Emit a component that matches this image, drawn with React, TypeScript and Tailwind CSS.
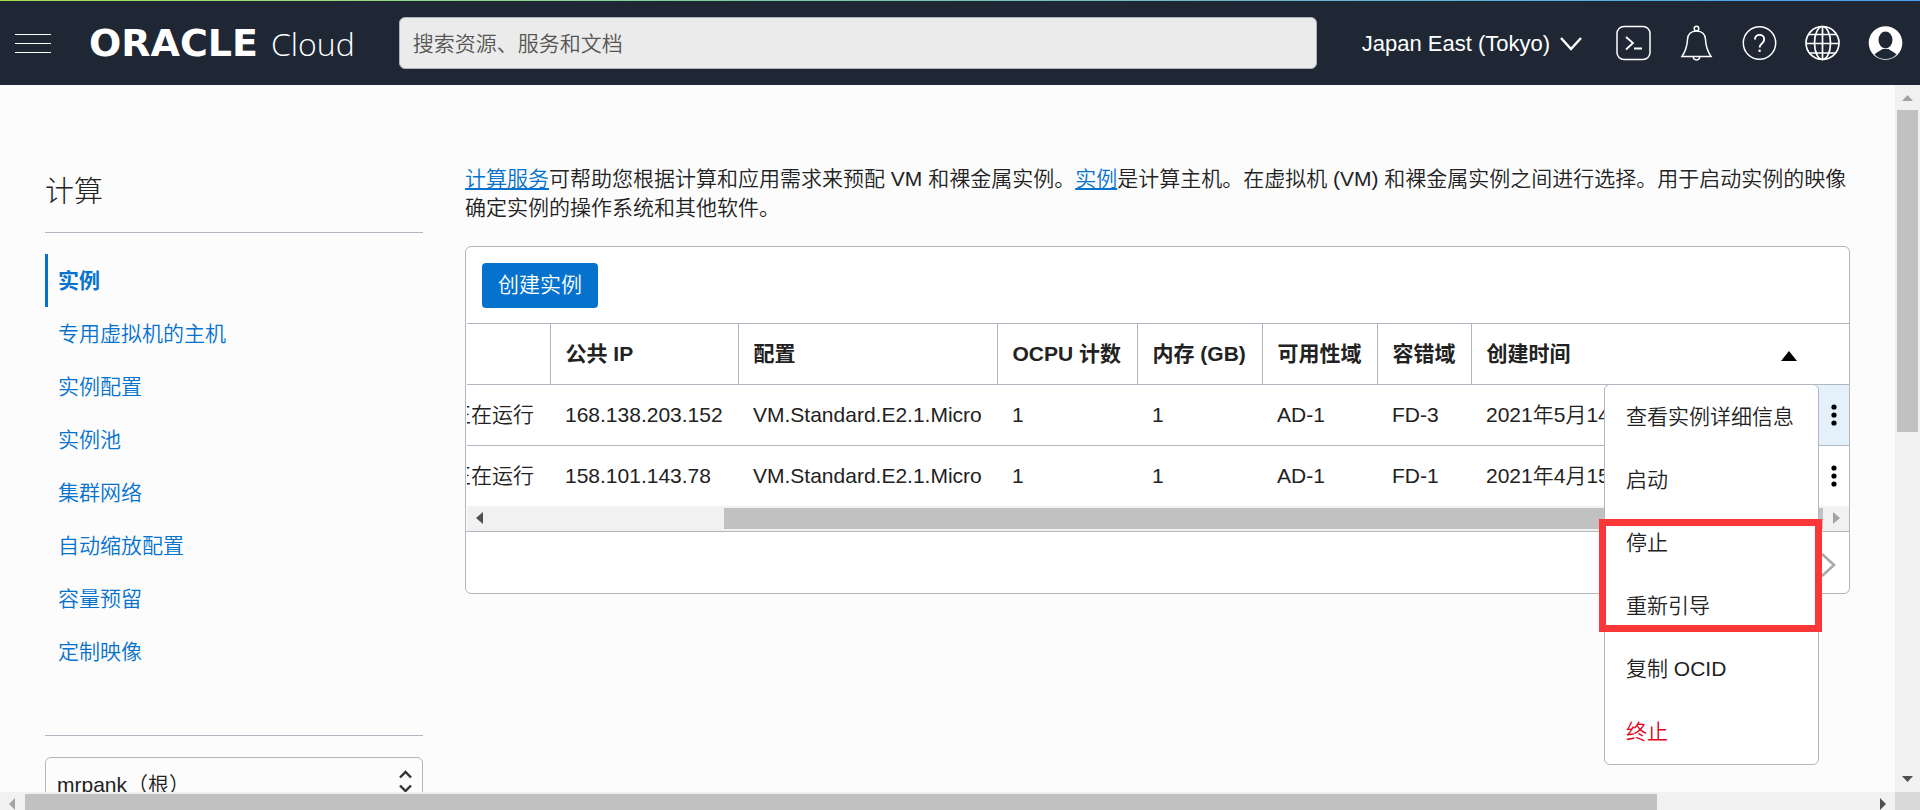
import React from "react";

const navItems = ["实例", "专用虚拟机的主机", "实例配置", "实例池", "集群网络", "自动缩放配置", "容量预留", "定制映像"];

const rows = [
  { status: "正在运行", ip: "168.138.203.152", shape: "VM.Standard.E2.1.Micro", ocpu: "1", memory: "1", ad: "AD-1", fd: "FD-3", created: "2021年5月14日", active: true },
  { status: "正在运行", ip: "158.101.143.78", shape: "VM.Standard.E2.1.Micro", ocpu: "1", memory: "1", ad: "AD-1", fd: "FD-1", created: "2021年4月15日", active: false },
];

const menuItems = ["查看实例详细信息", "启动", "停止", "重新引导", "复制 OCID", "终止"];

function Header() {
  return (
    <header className="shrink-0 bg-[#1e2733] text-white">
      <div className="h-px bg-linear-to-r from-[#a5e34d] to-[#4f9cf5]" />
      <div className="flex h-[84px] items-center pr-[17px] pl-[15px]">
        <button aria-label="导航菜单" className="flex w-9 shrink-0 flex-col gap-2">
          <span className="h-px bg-white" />
          <span className="h-px bg-white" />
          <span className="h-px bg-white" />
        </button>
        <a href="#" className="ml-[38px] flex shrink-0 items-baseline gap-2 leading-none">
          <span className="w-[174px] font-['DejaVu_Sans',sans-serif] text-[38px] font-bold">ORACLE</span>
          <span className="font-['Open_Sans',sans-serif] text-[32px] font-light">Cloud</span>
        </a>
        <input
          aria-label="搜索资源、服务和文档"
          placeholder="搜索资源、服务和文档"
          className="ml-[44px] h-[52px] min-w-0 flex-1 rounded-md border border-[#aeb4bd] bg-[#ebebeb] px-[13px] pt-[2px] text-[21px] text-[#333] placeholder:text-[#555]"
        />
        <button className="ml-[45px] flex shrink-0 items-center gap-[10px] text-[22px] whitespace-nowrap">
          Japan East (Tokyo)
          <svg width="22" height="16" viewBox="0 0 22 16" fill="none" stroke="currentColor" strokeWidth="2.4"><path d="M1 3 11 14 21 3" /></svg>
        </button>
        <nav aria-label="工具" className="ml-[34px] flex shrink-0 items-center gap-[28px]">
          <button aria-label="Cloud Shell">
            <svg width="35" height="36" viewBox="0 0 35 36" fill="none" stroke="currentColor" strokeWidth="1.5"><rect x="1" y="1.500" width="33" height="33" rx="7" /><path d="m10 12 7 6-7 6.500M18 23.500h8" strokeWidth="1.800" /></svg>
          </button>
          <button aria-label="通知">
            <svg width="35" height="36" viewBox="0 0 35 36" fill="none" stroke="currentColor" strokeWidth="1.5"><circle cx="17.500" cy="3.500" r="2.300" /><path d="M17.500 6c-5.500 0-8.800 3.500-9 8.500-.3 7-1.500 11-5.500 17h29c-4-6-5.200-10-5.500-17-.2-5-3.500-8.500-9-8.500ZM14.300 31.500c0 4.500 6.400 4.500 6.400 0" /></svg>
          </button>
          <button aria-label="帮助">
            <svg width="35" height="36" viewBox="0 0 35 36" fill="none" stroke="currentColor" strokeWidth="1.5"><circle cx="17.500" cy="18" r="16.200" /><path d="M13 14.500c0-6.200 9.200-6.200 9.200 0 0 4-4.600 4-4.600 8" strokeWidth="1.900" /><circle cx="17.600" cy="25.800" r="1.300" fill="currentColor" stroke="none" /></svg>
          </button>
          <button aria-label="语言">
            <svg width="35" height="36" viewBox="0 0 35 36" fill="none" stroke="currentColor" strokeWidth="1.700"><circle cx="17.500" cy="18" r="16.500" /><ellipse cx="17.500" cy="18" rx="8" ry="16.500" /><path d="M17.500 1v34M1 18.500h33M4 9.500h27M4 28h27" /></svg>
          </button>
          <button aria-label="概要信息">
            <svg width="35" height="36" viewBox="0 0 35 36"><circle cx="17.500" cy="18" r="16.800" fill="white" /><ellipse cx="17.500" cy="15" rx="7" ry="8.500" fill="#1e2733" /><path d="M6.500 29.500c2-2.500 5-3 8-5.500h6c3 2.500 6 3 8 5.500-5.500 6-16.500 6-22 0Z" fill="#1e2733" /></svg>
          </button>
        </nav>
      </div>
    </header>
  );
}

function Sidebar() {
  return (
    <aside className="w-[378px] shrink-0">
      <h1 className="flex h-[62px] items-start border-b border-[#b1b6c0] text-[29px] leading-[43px] font-light">计算</h1>
      <nav aria-label="计算" className="mt-[21px]">
        {navItems.map((item, i) => (
          <a
            key={item}
            href="#"
            className={
              i === 0
                ? "flex h-[53px] items-center border-l-3 border-[#0572ce] pl-[10px] font-bold text-[#0572ce]"
                : "flex h-[53px] items-center border-l-3 border-transparent pl-[10px] text-[#0572ce]"
            }
          >
            {item}
          </a>
        ))}
      </nav>
      <div className="mt-[57px] border-t border-[#b1b6c0] pt-[21px]">
        <div className="relative">
          <select aria-label="区间" className="h-[56px] w-full appearance-none rounded-md border border-[#b1b6c0] bg-transparent px-[11px] text-[21px]">
            <option>mrpank（根）</option>
          </select>
          <svg className="pointer-events-none absolute top-3 right-[11px]" width="13" height="24" viewBox="0 0 13 24" fill="none" stroke="#333" strokeWidth="2.400"><path d="m1 8.500 5.500-5.500L12 8.500M1 16.500 6.500 22l5.500-5.500" /></svg>
        </div>
      </div>
    </aside>
  );
}

function InstanceTable() {
  return (
    <table className="w-full table-fixed border-collapse text-left">
      <colgroup>
        <col className="w-[83px]" />
        <col className="w-[188px]" />
        <col className="w-[259px]" />
        <col className="w-[140px]" />
        <col className="w-[125px]" />
        <col className="w-[115px]" />
        <col className="w-[94px]" />
        <col />
        <col className="w-[31px]" />
      </colgroup>
      <thead>
        <tr className="h-[61px] border-y border-[#b1b6c0] whitespace-nowrap">
          <th aria-label="状态" className="border-r border-[#b1b6c0]" />
          {["公共 IP", "配置", "OCPU 计数", "内存 (GB)", "可用性域", "容错域"].map((h) => (
            <th key={h} className="border-r border-[#b1b6c0] pl-[15px]">{h}</th>
          ))}
          <th className="pl-[15px]">
            <div className="flex items-center justify-between pr-[21px]">
              创建时间
              <svg className="mt-1" width="16" height="10" viewBox="0 0 16 10"><path d="M8 0 16 10H0Z" /></svg>
            </div>
          </th>
          <th aria-label="操作" />
        </tr>
      </thead>
      <tbody>
        {rows.map((r) => (
          <tr key={r.ip} className="h-[61px] border-b border-[#b1b6c0] whitespace-nowrap last:h-[60px] last:border-b-0">
            <td><div className="flex justify-end overflow-hidden pr-4">{r.status}</div></td>
            <td className="pl-[15px]">{r.ip}</td>
            <td className="pl-[15px]">{r.shape}</td>
            <td className="pl-[15px]">{r.ocpu}</td>
            <td className="pl-[15px]">{r.memory}</td>
            <td className="pl-[15px]">{r.ad}</td>
            <td className="pl-[15px]">{r.fd}</td>
            <td className="pl-[15px]">{r.created}</td>
            <td className={r.active ? "bg-[#e4f1fb]" : ""}>
              <button aria-label="操作" className="flex w-full justify-center">
                <svg width="6" height="22" viewBox="0 0 6 22"><circle cx="3" cy="3" r="2.600" /><circle cx="3" cy="11" r="2.600" /><circle cx="3" cy="19" r="2.600" /></svg>
              </button>
            </td>
          </tr>
        ))}
      </tbody>
    </table>
  );
}

function ActionMenu() {
  return (
    <div className="absolute top-[137px] right-[30px] w-[215px] rounded-md border border-[#b1b6c0] bg-white pb-px">
      {menuItems.map((item) => (
        <button
          key={item}
          className={
            item === "终止"
              ? "flex h-[63px] w-full items-center px-[21px] text-[#e2001a]"
              : "flex h-[63px] w-full items-center px-[21px]"
          }
        >
          {item}
        </button>
      ))}
      <div className="pointer-events-none absolute top-[134px] -right-1 -left-[6px] h-[113px] border-7 border-[#fb3838]" />
    </div>
  );
}

export default function App() {
  return (
    <div className="flex h-screen flex-col overflow-hidden bg-[#fcfcfc] font-['Liberation_Sans','Noto_Sans_CJK_SC',sans-serif] text-[21px] font-[350] text-[#222]">
      <Header />
      <div className="flex min-h-0 flex-1">
        <div className="flex min-w-0 flex-1 gap-[42px] overflow-hidden pt-[86px] pr-[45px] pl-[45px]">
          <Sidebar />
          <main className="min-w-0 flex-1">
            <p className="mt-[-7px] leading-[29px]">
              <a href="#" className="text-[#0572ce] underline decoration-2 underline-offset-2">计算服务</a>可帮助您根据计算和应用需求来预配 VM 和裸金属实例。<a href="#" className="text-[#0572ce] underline decoration-2 underline-offset-2">实例</a>是计算主机。在虚拟机 (VM) 和裸金属实例之间进行选择。用于启动实例的映像确定实例的操作系统和其他软件。
            </p>
            <section className="relative mt-6 rounded-md border border-[#b1b6c0] bg-white">
              <div className="flex h-[76px] items-center px-4">
                <button className="h-[45px] rounded-sm bg-[#0572ce] px-4 text-white">创建实例</button>
              </div>
              <div className="pl-px"><InstanceTable /></div>
              <div className="ml-px flex h-[25px] items-center bg-[#f1f1f1] px-[9px]">
                <svg width="7" height="12" viewBox="0 0 7 12"><path d="M7 0v12L0 6Z" fill="#505050" /></svg>
                <div className="mr-[10px] ml-[241px] h-[21px] flex-1 bg-[#c1c1c1]" />
                <svg width="7" height="12" viewBox="0 0 7 12"><path d="M0 0v12l7-6Z" fill="#a3a3a3" /></svg>
              </div>
              <div className="flex h-[62px] items-center justify-end border-t border-[#b1b6c0] pt-[6px] pr-[13px]">
                <button aria-label="下一页">
                  <svg width="15" height="24" viewBox="0 0 15 24" fill="none" stroke="#aaa" strokeWidth="2.600"><path d="m1 1 12 11L1 23" /></svg>
                </button>
              </div>
              <ActionMenu />
            </section>
          </main>
        </div>
        <div className="flex w-[25px] shrink-0 flex-col items-center bg-[#f1f1f1] py-[10px]">
          <svg width="11" height="6" viewBox="0 0 11 6"><path d="M0 6h11L5.500 0Z" fill="#a3a3a3" /></svg>
          <div className="mt-[9px] h-[322px] w-[21px] bg-[#c1c1c1]" />
          <svg className="mt-auto" width="11" height="6" viewBox="0 0 11 6"><path d="M0 0h11L5.500 6Z" fill="#505050" /></svg>
        </div>
      </div>
      <div className="flex h-[18px] shrink-0 bg-[#f1f1f1]">
        <div className="flex flex-1 pt-[2px] pl-[9px]">
          <svg className="mt-1" width="6" height="12" viewBox="0 0 6 12"><path d="M6 0v12L0 6Z" fill="#a3a3a3" /></svg>
          <div className="mr-[223px] ml-[10px] flex-1 bg-[#c1c1c1]" />
          <svg className="mt-1 mr-[9px]" width="6" height="12" viewBox="0 0 6 12"><path d="M0 0v12l6-6Z" fill="#505050" /></svg>
        </div>
        <div className="w-[25px] bg-[#dadada]" />
      </div>
    </div>
  );
}
